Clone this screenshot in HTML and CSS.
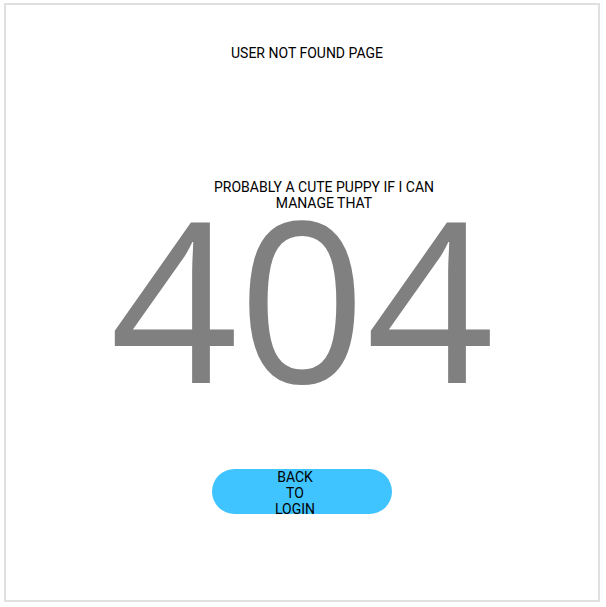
FILE: index.html
```html
<!DOCTYPE html>
<html lang="en">
<head>
<meta charset="utf-8">
<title>User not found</title>
<link rel="stylesheet" href="styles.css">
</head>
<body>
  <main class="frame">
    <h1 class="title">USER NOT FOUND PAGE</h1>
    <p class="subtitle">PROBABLY A CUTE PUPPY IF I CAN MANAGE THAT</p>
    <div class="code">404</div>
    <a class="back" href="#"><span class="back-label">BACK TO LOGIN</span></a>
  </main>
</body>
</html>
```

FILE: styles.css
```css
html, body {
  margin: 0;
  padding: 0;
  background: #ffffff;
}

body {
  padding: 3px 6px 5px 4px;
  font-family: Roboto, "Liberation Sans", Arial, sans-serif;
  color: #000000;
}

.frame {
  box-sizing: border-box;
  width: 596px;
  height: 599px;
  border: 2px solid #e0e0e0;
  display: flex;
  flex-direction: column;
  align-items: center;
  padding-top: 40px;
}

.title {
  margin: 0 0 0 10px;
  font-size: 14px;
  font-weight: 400;
  line-height: 16px;
}

.subtitle {
  margin: 118px 0 0 44px;
  width: 240px;
  text-align: center;
  font-size: 14px;
  line-height: 16.3px;
}

.code {
  margin-top: 5px;
  font-family: "Open Sans", "Noto Sans", sans-serif;
  font-size: 224px;
  line-height: 160px;
  color: #808080;
}

.back {
  margin-top: 92px;
  width: 180px;
  height: 45px;
  border-radius: 23px;
  background: #40c4ff;
  display: flex;
  justify-content: center;
  align-items: flex-start;
  overflow: hidden;
  text-decoration: none;
  color: #000000;
  font-size: 14px;
  line-height: 16px;
}

.back-label {
  width: 50px;
  margin-right: 14px;
  text-align: center;
}
```
